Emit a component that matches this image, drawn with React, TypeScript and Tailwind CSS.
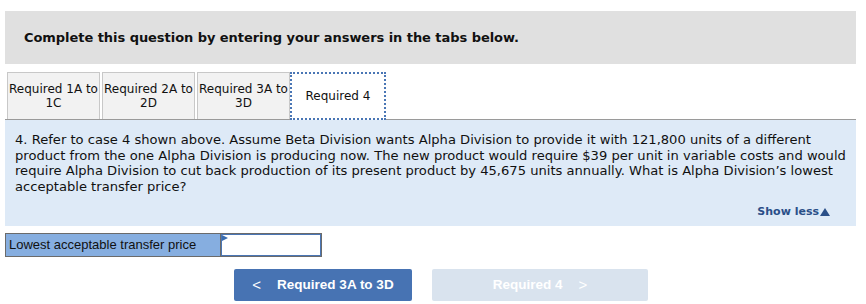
import React from "react";

const verdana = { fontFamily: '"DejaVu Sans", Verdana, sans-serif' };

export default function App() {
  return (
    <div className="w-[866px] h-[304px] bg-white relative overflow-hidden text-black" style={verdana}>
      <div className="pt-[11px] px-[5px] w-[861px]">
        <div className="h-[53px] bg-[#e0e0e0] pl-[19px] pt-[14px]">
          <span className="font-bold text-[13px] leading-[16px] text-[#111] tracking-[-0.05px]">Complete this question by entering your answers in the tabs below.</span>
        </div>
        <div className="mt-[8px] flex items-end border-b border-[#9a9a9a] h-[48px]">
          <div className="flex h-[47px]">
            <div className="ml-[2px] w-[93px] h-[47px] bg-[#f2f2f2] border border-b-0 border-[#c8c8c8] flex items-center justify-center text-center text-[12px] leading-[14px] text-[#111]">
              Required 1A to<br />1C
            </div>
            <div className="ml-[2px] w-[93px] h-[47px] bg-[#f2f2f2] border border-b-0 border-[#c8c8c8] flex items-center justify-center text-center text-[12px] leading-[14px] text-[#111]">
              Required 2A to<br />2D
            </div>
            <div className="ml-[2px] w-[93px] h-[47px] bg-[#f2f2f2] border border-b-0 border-[#c8c8c8] flex items-center justify-center text-center text-[12px] leading-[14px] text-[#111]">
              Required 3A to<br />3D
            </div>
            <div className="w-[96px] h-[48px] bg-white border-2 border-dotted border-[#4a76b5] flex items-center justify-center text-[12px] text-[#111] -mb-[1px] relative z-10">
              Required 4
            </div>
          </div>
        </div>
        <div className="h-[106px] bg-[#deeaf7] relative">
          <div className="pl-[10px] pt-[12px] text-[13.1px] leading-[15.5px] text-[#111]">
            <div className="whitespace-nowrap">4. Refer to case 4 shown above. Assume Beta Division wants Alpha Division to provide it with 121,800 units of a different</div>
            <div className="whitespace-nowrap">product from the one Alpha Division is producing now. The new product would require $39 per unit in variable costs and would</div>
            <div className="whitespace-nowrap">require Alpha Division to cut back production of its present product by 45,675 units annually. What is Alpha Division’s lowest</div>
            <div className="whitespace-nowrap">acceptable transfer price?</div>
          </div>
          <div className="absolute right-[26px] top-[84px] flex items-center text-[11px] font-bold text-[#2a4f88]">
            Show less
            <svg width="10" height="8" viewBox="0 0 10 8" className="ml-[1px]"><path d="M5 0 L10 8 L0 8 Z" fill="#2a4f88" /></svg>
          </div>
        </div>
        <div className="mt-[7px] flex">
          <div className="w-[216px] h-[24px] bg-[#86aee0] border border-[#6b6b6b] flex items-center pl-[3px] text-[13px] text-[#111]" style={{ fontFamily: '"Liberation Sans", Arial, sans-serif' }}>
            Lowest acceptable transfer price
          </div>
          <div className="w-[101px] h-[24px] border border-l-0 border-[#6b6b6b] bg-white relative">
            <div className="absolute inset-0 border border-[#4a76b5]"></div>
            <svg width="6" height="6" viewBox="0 0 6 6" className="absolute left-[1px] top-[1px]"><path d="M0 0 L6 3 L0 6 Z" fill="#3a6db0" /></svg>
          </div>
        </div>
        <div className="mt-[12px] flex pl-[229px] gap-[20px]" style={{ fontFamily: '"Liberation Sans", Arial, sans-serif' }}>
          <div className="w-[178px] h-[32px] rounded-[2px] bg-[#4773b3] flex items-center justify-center text-white font-bold text-[13.5px]">
            <span className="mr-[16px] font-normal text-[15px]">&lt;</span>Required 3A to 3D
          </div>
          <div className="w-[216px] h-[32px] rounded-[2px] bg-[#d9e3ee] flex items-center justify-center text-white font-bold text-[13.5px]">
            Required 4<span className="ml-[16px] font-normal text-[15px]">&gt;</span>
          </div>
        </div>
      </div>
    </div>
  );
}
